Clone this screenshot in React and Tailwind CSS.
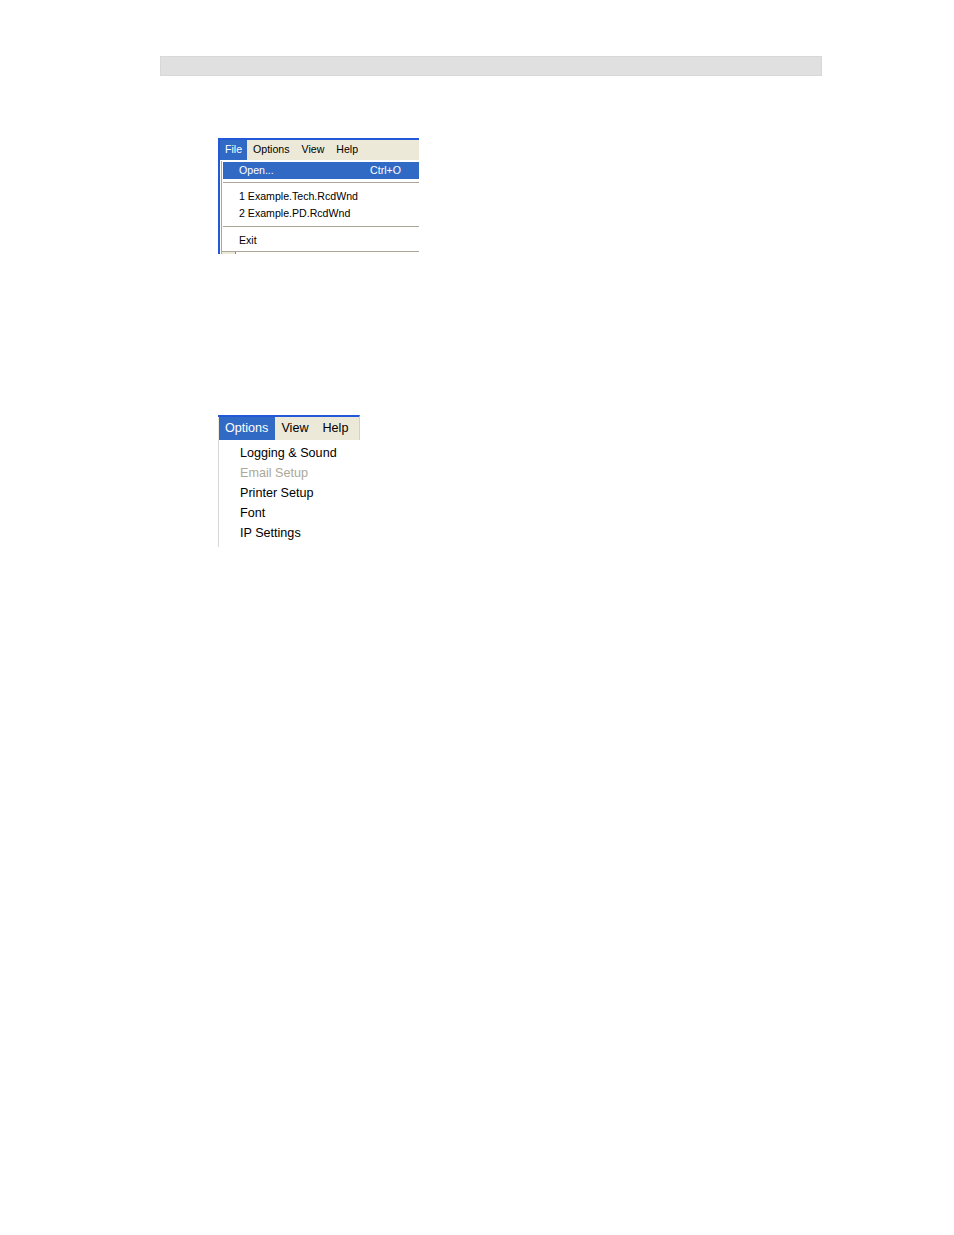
export default function App() {
  const font = { fontFamily: '"Liberation Sans", Arial, sans-serif' };
  return (
    <div className="min-h-[1235px] w-[954px] bg-white pt-[56px]" style={font}>
      <div className="ml-[160px] h-[20px] w-[662px] bg-[#e0e0e0] border border-[#d8d8d8]" />

      {/* File menu */}
      <div className="ml-[218px] mt-[62px] w-[201px] border-t-2 border-l-2 border-[#2358d8]">
        <div className="flex h-[20px] items-stretch bg-[#ece9d8] text-[10.6px] text-black">
          <div className="flex items-center bg-[#316ac5] pl-[5px] pr-[5px] text-white w-[27px]">File</div>
          <div className="flex items-center pl-[6px] pr-[6px]">Options</div>
          <div className="flex items-center pl-[6px] pr-[6px]">View</div>
          <div className="flex items-center pl-[6px] pr-[6px]">Help</div>
        </div>
        <div className="h-[1px] bg-white" />
        <div className="ml-[1px] border-l border-[#aca899] bg-white pt-[1px] text-[10.6px] text-black">
          <div className="ml-[1px] flex h-[17px] items-center justify-between bg-[#316ac5] pl-[16px] pr-[18px] text-white">
            <span>Open...</span>
            <span>Ctrl+O</span>
          </div>
          <div className="mt-[3px] mb-[3px] ml-[1px] h-[2px] border-t border-[#aca899] border-b border-b-white" />
          <div className="flex h-[17px] items-center pl-[17px] pt-[2px]">1 Example.Tech.RcdWnd</div>
          <div className="flex h-[17px] items-center pl-[17px] pt-[2px]">2 Example.PD.RcdWnd</div>
          <div className="mt-[5px] mb-[3px] ml-[1px] h-[2px] border-t border-[#aca899] border-b border-b-white" />
          <div className="flex h-[17px] items-center pl-[17px] pt-[2px]">Exit</div>
          <div className="mt-[3px] h-[1px] bg-[#aca899]" />
          <div className="flex h-[2px]">
            <div className="w-[13px] bg-[#ece9d8]" />
            <div className="w-[1px] bg-[#808080]" />
          </div>
        </div>
      </div>

      {/* Options menu */}
      <div className="ml-[218px] mt-[161px] w-[142px]">
        <div className="flex h-[25px] items-stretch border-t-2 border-[#2358d8] bg-[#ece9d8] text-[12.6px] text-black border-r border-r-[#d4d0c8]">
          <div className="flex items-center bg-[#316ac5] pl-[6px] pr-[7px] ml-[1px] text-white">Options</div>
          <div className="flex items-center pl-[6px] pr-[7px]">View</div>
          <div className="flex items-center pl-[7px] pr-[6px]">Help</div>
        </div>
        <div className="border-l border-[#d8d8d8] pb-[4px] pt-[3px] text-[12.6px] text-black">
          <div className="flex h-[20px] items-center pl-[21px]">Logging &amp; Sound</div>
          <div className="flex h-[20px] items-center pl-[21px] text-[#aca899]">Email Setup</div>
          <div className="flex h-[20px] items-center pl-[21px]">Printer Setup</div>
          <div className="flex h-[20px] items-center pl-[21px]">Font</div>
          <div className="flex h-[20px] items-center pl-[21px]">IP Settings</div>
        </div>
      </div>
    </div>
  );
}
